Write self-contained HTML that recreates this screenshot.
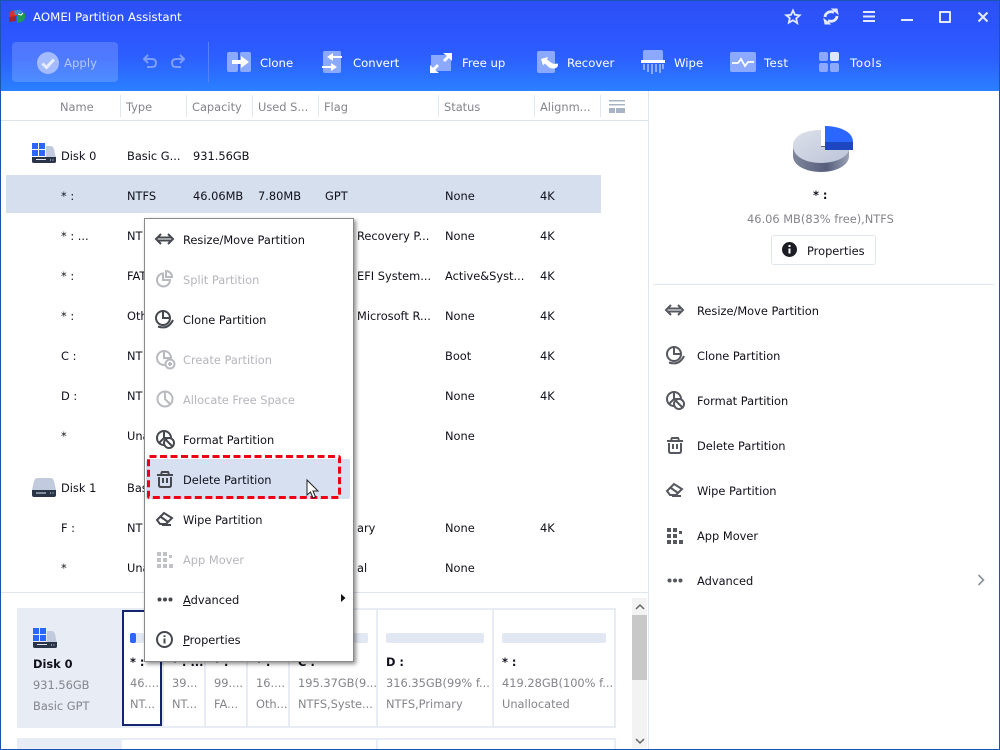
<!DOCTYPE html>
<html><head><meta charset="utf-8"><style>
html,body{margin:0;padding:0;background:#fff}
#w{position:relative;width:1000px;height:750px;overflow:hidden;background:#fff;font-family:"DejaVu Sans","Liberation Sans",sans-serif;font-size:11.4px;color:#10101c}
.t{position:absolute;white-space:nowrap;line-height:16px}
.a{position:absolute}
.h{color:#84848c}
.g{color:#84848c}
.d{color:#b4b6bc}
.b{color:#fff;font-size:11.7px}
.s{position:absolute;top:95px;width:1px;height:22px;background:#e2e7f0}
.cd{position:absolute;top:610px;height:116px;background:#fff}
svg{position:absolute;overflow:visible}
u{text-decoration:underline}
</style></head><body><div id="w">
<div class="a" style="left:0;top:0;width:1000px;height:91px;background:linear-gradient(#2b50f4 0,#2d56ff 40%,#2c60ff 65%,#2a80ff 100%)"></div>

<svg style="left:8px;top:9px" width="18" height="15" viewBox="0 0 18 15"><path d="M1 6Q2 1 8 1L9 7H8L1 11Z" fill="#d8322e"/><path d="M1 8l7-1v5l-7 1z" fill="#a8222a"/><path d="M6 2Q12-1 15 3L10 6H7z" fill="#3a8ccc"/><path d="M9 5l8-1v5q-1 4-8 5z" fill="#1f9c50"/><path d="M10 5l3 1 2-2" stroke="#fff" fill="none"/></svg>
<div class="t" style="left:33px;top:9px;color:#fff;font-size:11.8px">AOMEI Partition Assistant</div>

<div class="a" style="left:12px;top:42px;width:106px;height:40px;border-radius:4px;background:rgba(255,255,255,.17)"></div>
<svg style="left:37px;top:52px" width="22" height="22"><circle cx="11" cy="11" r="11" fill="#a4bcff"/><path d="M5.500 11.500l4 4 7.500-8" stroke="#e8eeff" stroke-width="3" fill="none"/></svg>
<div class="t b" style="left:64px;top:55px;color:#b4c8ff">Apply</div>
<svg style="left:142px;top:54px" width="44" height="14" fill="none" stroke="#7e9eff" stroke-width="2"><path d="M2 5h8q4 0 4 4t-4 4H5M6 1L2 5l4 4"/><path d="M42 5h-8q-4 0-4 4t4 4h5M38 1l4 4-4 4"/></svg>
<div class="a" style="left:208px;top:42px;width:1px;height:40px;background:#5580ff"></div>

<svg style="left:227px;top:52px" width="24" height="20"><rect width="11" height="20" rx="2" fill="#8aa9ff"/><rect x="13" width="11" height="20" rx="2" fill="#8aa9ff"/><path d="M5 8h9V4l8 6-8 6v-4H5z" fill="#fff"/></svg>
<div class="t b" style="left:260px;top:55px">Clone</div>
<svg style="left:322px;top:51px" width="20" height="22"><rect x="1" y="0" width="18" height="22" rx="2" fill="#8aa9ff"/><path d="M20 5h-9V2L5 6l6 4V7h9zM0 15h9v-3l6 4-6 4v-3H0z" fill="#fff"/></svg>
<div class="t b" style="left:353px;top:55px">Convert</div>
<svg style="left:430px;top:53px" width="22" height="20"><rect x="1" y="2" width="20" height="16" fill="#8aa9ff"/><path d="M13 0h9v8l-3-3-4 4-2-2 4-4zM9 20H0v-8l3 3 4-4 2 2-4 4z" fill="#fff"/></svg>
<div class="t b" style="left:462px;top:55px">Free up</div>
<svg style="left:537px;top:51px" width="22" height="22"><rect width="18" height="22" rx="2" fill="#8aa9ff"/><path d="M4 8l7-2-1 2.500 4 3q2 2 6 1 1 0 1 1 0 4-5 4-3 0-5-2l-3-3-2 2z" fill="#fff"/></svg>
<div class="t b" style="left:567px;top:55px">Recover</div>
<svg style="left:641px;top:50px" width="24" height="24"><path d="M2 12V2q0-2 2-2h16q2 0 2 2v10z" fill="#8aa9ff"/><rect y="10" width="24" height="3" fill="#fff"/><path d="M3 14v6M7 14v8M11 14v10M15 14v8M19 14v9M22 14v5" stroke="#8aa9ff" stroke-width="2"/></svg>
<div class="t b" style="left:674px;top:55px">Wipe</div>
<svg style="left:730px;top:52px" width="26" height="20"><rect width="26" height="20" rx="2" fill="#8aa9ff"/><path d="M2 11h6l3-4 4 7 3-4h6" stroke="#fff" stroke-width="1.800" fill="none"/></svg>
<div class="t b" style="left:764px;top:55px;letter-spacing:.3px">Test</div>
<svg style="left:819px;top:52px" width="20" height="20"><rect width="9" height="9" rx="2" fill="#8aa9ff"/><rect x="11" width="9" height="9" rx="2" fill="#dfe7ff"/><rect y="11" width="9" height="9" rx="2" fill="#8aa9ff"/><rect x="11" y="11" width="9" height="9" rx="2" fill="#8aa9ff"/></svg>
<div class="t b" style="left:850px;top:55px;letter-spacing:.7px">Tools</div>

<svg style="left:785px;top:9px" width="16" height="15"><path d="M8 1.500l2 4.300 4.700.5-3.500 3.200 1 4.600L8 11.300 3.800 13.600l1-4.600L1.300 6.300 6 5.800z" fill="none" stroke="#e4eaff" stroke-width="1.800"/></svg>
<svg style="left:823px;top:9px" width="16" height="15" fill="none" stroke="#e4eaff" stroke-width="2.800"><path d="M2 8a6 5.500 0 0 1 9-4.500M14 7a6 5.500 0 0 1-9 4.500"/><path d="M9 0l6 5-1-5zM7 15L1 10l1 5z" fill="#e4eaff" stroke-width="1"/></svg>
<div class="a" style="left:863px;top:11px;width:12px;height:11px;background:linear-gradient(#e4eaff 0 2px,transparent 2px 4.500px,#e4eaff 4.500px 6.500px,transparent 6.500px 9px,#e4eaff 9px)"></div>
<div class="a" style="left:901px;top:19px;width:12px;height:2px;background:#e4eaff"></div>
<div class="a" style="left:939px;top:11px;width:8px;height:8px;border:2px solid #e4eaff;border-radius:1px"></div>
<svg style="left:977px;top:11px" width="12" height="12"><path d="M1.500 1.500l9 9M10.500 1.500l-9 9" stroke="#e4eaff" stroke-width="2"/></svg>

<!-- header -->
<div class="t h" style="left:60px;top:99px">Name</div><div class="t h" style="left:126px;top:99px">Type</div><div class="t h" style="left:192px;top:99px">Capacity</div><div class="t h" style="left:258px;top:99px">Used S...</div><div class="t h" style="left:324px;top:99px">Flag</div><div class="t h" style="left:444px;top:99px">Status</div><div class="t h" style="left:540px;top:99px">Alignm...</div>
<div class="s" style="left:120px"></div><div class="s" style="left:186px"></div><div class="s" style="left:252px"></div><div class="s" style="left:318px"></div><div class="s" style="left:438px"></div><div class="s" style="left:534px"></div><div class="s" style="left:600px"></div>
<svg style="left:609px;top:100px" width="16" height="14"><path d="M0 0h16v1.500H0zM0 4h16v1.500H0zM0 8h16v5H0z" fill="#a8b4c6"/><path d="M6 8h1v5H6z" fill="#fff"/></svg>
<div class="a" style="left:1px;top:120px;width:647px;height:1px;background:#dde3ee"></div>
<div class="a" style="left:648px;top:91px;width:1px;height:659px;background:#dfe4ee"></div>

<!-- rows -->
<div class="a" style="left:6px;top:175px;width:595px;height:38px;background:#d5dfee"></div>
<svg style="left:32px;top:143px" width="24" height="21"><path d="M14 3h5q2 0 3 3l2 9v5H0v-5h14z" fill="#c2cade"/><path d="M0 14h24v4q0 2-2 2H2q-2 0-2-2z" fill="#2a3448"/><path d="M4 16.500h10M18 17h1M20.500 17h1" stroke="#dfe4ee" stroke-width="1"/><path d="M0 0h6v6H0zM7 0h6v6H7zM0 7h6v6H0zM7 7h6v6H7z" fill="#2d66ff"/></svg>
<div class="t" style="left:61px;top:148px">Disk 0</div><div class="t" style="left:127px;top:148px">Basic G...</div><div class="t" style="left:193px;top:148px">931.56GB</div>
<div class="t" style="left:61px;top:188px">* :</div><div class="t" style="left:127px;top:188px">NTFS</div><div class="t" style="left:193px;top:188px">46.06MB</div><div class="t" style="left:258px;top:188px">7.80MB</div><div class="t" style="left:325px;top:188px">GPT</div><div class="t" style="left:445px;top:188px">None</div><div class="t" style="left:540px;top:188px">4K</div>
<div class="t" style="left:61px;top:228px">* : ...</div><div class="t" style="left:127px;top:228px">NT</div><div class="t" style="left:357px;top:228px">Recovery P...</div><div class="t" style="left:445px;top:228px">None</div><div class="t" style="left:540px;top:228px">4K</div>
<div class="t" style="left:61px;top:268px">* :</div><div class="t" style="left:127px;top:268px">FAT</div><div class="t" style="left:357px;top:268px">EFI System...</div><div class="t" style="left:445px;top:268px">Active&amp;Syst...</div><div class="t" style="left:540px;top:268px">4K</div>
<div class="t" style="left:61px;top:308px">* :</div><div class="t" style="left:127px;top:308px">Oth</div><div class="t" style="left:357px;top:308px">Microsoft R...</div><div class="t" style="left:445px;top:308px">None</div><div class="t" style="left:540px;top:308px">4K</div>
<div class="t" style="left:61px;top:348px">C :</div><div class="t" style="left:127px;top:348px">NT</div><div class="t" style="left:445px;top:348px">Boot</div><div class="t" style="left:540px;top:348px">4K</div>
<div class="t" style="left:61px;top:388px">D :</div><div class="t" style="left:127px;top:388px">NT</div><div class="t" style="left:445px;top:388px">None</div><div class="t" style="left:540px;top:388px">4K</div>
<div class="t" style="left:61px;top:428px">*</div><div class="t" style="left:127px;top:428px">Una</div><div class="t" style="left:445px;top:428px">None</div>
<svg style="left:32px;top:478px" width="24" height="19"><path d="M5 0h14q2 0 3 3l2 9v4H0v-4l2-9q1-3 3-3z" fill="#c2cade"/><path d="M0 12h24v5q0 2-2 2H2q-2 0-2-2z" fill="#2a3448"/><path d="M4 15h10M18 15h1M20.500 15h1" stroke="#dfe4ee"/></svg>
<div class="t" style="left:61px;top:480px">Disk 1</div><div class="t" style="left:127px;top:480px">Bas</div>
<div class="t" style="left:61px;top:520px">F :</div><div class="t" style="left:127px;top:520px">NT</div><div class="t" style="left:357px;top:520px">ary</div><div class="t" style="left:445px;top:520px">None</div><div class="t" style="left:540px;top:520px">4K</div>
<div class="t" style="left:61px;top:560px">*</div><div class="t" style="left:127px;top:560px">Una</div><div class="t" style="left:357px;top:560px">al</div><div class="t" style="left:445px;top:560px">None</div>

<!-- bottom -->
<div class="a" style="left:1px;top:592px;width:647px;height:1px;background:#dfe4ee"></div>
<div class="a" style="left:17px;top:608px;width:105px;height:120px;background:#e8ecf4"></div>
<div class="a" style="left:122px;top:608px;width:494px;height:120px;background:#e8ecf4"></div>
<svg style="left:33px;top:628px" width="24" height="21"><path d="M14 3h5q2 0 3 3l2 9v5H0v-5h14z" fill="#c2cade"/><path d="M0 14h24v4q0 2-2 2H2q-2 0-2-2z" fill="#2a3448"/><path d="M4 16.500h10M18 17h1M20.500 17h1" stroke="#dfe4ee"/><path d="M0 0h6v6H0zM7 0h6v6H7zM0 7h6v6H0zM7 7h6v6H7z" fill="#2d66ff"/></svg>
<div class="t" style="left:33px;top:656px;font-weight:bold">Disk 0</div>
<div class="t g" style="left:33px;top:677px">931.56GB</div>
<div class="t g" style="left:33px;top:698px">Basic GPT</div>

<div class="cd" style="left:122px;width:36px;border:2px solid #14246e;top:610px;height:112px"></div>
<div class="cd" style="left:164px;width:40px"></div><div class="cd" style="left:206px;width:40px"></div><div class="cd" style="left:248px;width:40px"></div><div class="cd" style="left:290px;width:86px"></div><div class="cd" style="left:378px;width:114px"></div><div class="cd" style="left:494px;width:120px"></div>
<div class="a" style="left:130px;top:633px;width:14px;height:10px;background:#e2e8f3;border-radius:2px"></div>
<div class="a" style="left:130px;top:633px;width:6px;height:10px;background:#2d66ff;border-radius:2px"></div>
<div class="a" style="left:354px;top:633px;width:14px;height:10px;background:#e2e8f3;border-radius:0 2px 2px 0"></div>
<div class="a" style="left:386px;top:633px;width:98px;height:10px;background:#e2e8f3;border-radius:2px"></div>
<div class="a" style="left:502px;top:633px;width:104px;height:10px;background:#e2e8f3;border-radius:2px"></div>
<div class="t" style="left:130px;top:654px;font-weight:bold">*&nbsp;:</div>
<div class="t g" style="left:130px;top:675px">46....</div><div class="t g" style="left:130px;top:696px">NT...</div>
<div class="t" style="left:172px;top:654px;font-weight:bold">* : ...</div><div class="t g" style="left:172px;top:675px">39...</div><div class="t g" style="left:172px;top:696px">NT...</div>
<div class="t" style="left:214px;top:654px;font-weight:bold">* :</div><div class="t g" style="left:214px;top:675px">99....</div><div class="t g" style="left:214px;top:696px">FA...</div>
<div class="t" style="left:256px;top:654px;font-weight:bold">* :</div><div class="t g" style="left:256px;top:675px">16....</div><div class="t g" style="left:256px;top:696px">Oth...</div>
<div class="t" style="left:298px;top:654px;font-weight:bold">C :</div>
<div class="t g" style="left:298px;top:675px">195.37GB(9...</div><div class="t g" style="left:298px;top:696px">NTFS,Syste...</div>
<div class="t" style="left:386px;top:654px;font-weight:bold">D :</div>
<div class="t g" style="left:386px;top:675px">316.35GB(99% f...</div><div class="t g" style="left:386px;top:696px">NTFS,Primary</div>
<div class="t" style="left:502px;top:654px;font-weight:bold">* :</div>
<div class="t g" style="left:502px;top:675px">419.28GB(100% f...</div><div class="t g" style="left:502px;top:696px">Unallocated</div>
<div class="a" style="left:17px;top:738px;width:105px;height:12px;background:#e8ecf4"></div>
<div class="a" style="left:122px;top:738px;width:494px;height:12px;background:#e8ecf4"></div>
<div class="a" style="left:122px;top:740px;width:254px;height:10px;background:#fff"></div>
<div class="a" style="left:378px;top:740px;width:236px;height:10px;background:#fff"></div>
<div class="a" style="left:632px;top:598px;width:15px;height:150px;background:#f3f3f3"></div>
<div class="a" style="left:632px;top:615px;width:15px;height:65px;background:#c8c8c8"></div>
<svg style="left:635px;top:603px" width="10" height="142" fill="none" stroke="#666" stroke-width="1.500"><path d="M1 6l4-4 4 4M1 136l4 4 4-4"/></svg>

<!-- right -->
<svg style="left:790px;top:126px" width="66" height="50"><defs><linearGradient id="p1" x1="0" x2="1" y1="0" y2="1"><stop offset="0" stop-color="#dce0ea"/><stop offset="1" stop-color="#bcc4d8"/></linearGradient><linearGradient id="p2" x1="0" x2="1"><stop offset="0" stop-color="#7e869c"/><stop offset=".6" stop-color="#565e7c"/><stop offset="1" stop-color="#9aa2b6"/></linearGradient></defs><path d="M3 20v10c0 9 12 16 28 16s28-7 28-16V20z" fill="url(#p2)"/><path d="M31 4C14 4 3 10 3 20s12 17 28 17 28-7 28-14v-2H31z" fill="url(#p1)"/><path d="M35 0c13 0 28 5 28 16H35z" fill="#2a66ff"/><path d="M35 16h28v8H35z" fill="#1e46c0"/></svg>
<div class="t" style="left:813px;top:187px;font-weight:bold">* :</div>
<div class="t g" style="left:747px;top:211px">46.06 MB(83% free),NTFS</div>
<div class="a" style="left:771px;top:235px;width:103px;height:28px;border:1px solid #dfe4ee;border-radius:3px"></div>
<svg style="left:782px;top:242px" width="15" height="15"><circle cx="7.500" cy="7.500" r="7.500" fill="#1c1c24"/><path d="M6.500 6.500h2v5h-2zM6.500 3h2v2h-2z" fill="#fff"/></svg>
<div class="t" style="left:807px;top:243px">Properties</div>
<div class="a" style="left:653px;top:284px;width:341px;height:1px;background:#e2e6f0"></div>

<svg width="0" height="0"><defs>
<g id="rz" fill="none"><path d="M6 1L1 6l5 5M13 1l5 5-5 5M2 4.500h15M2 7.500h15" stroke-width="2"/></g>
<g id="cl" fill="none" stroke-width="2"><circle cx="8" cy="8" r="7"/><path d="M8 1v7h7"/><path d="M3 16.500Q13 20 18 10"/></g>
<g id="fm" fill="none" stroke-width="2"><circle cx="8" cy="8" r="7"/><path d="M8 1v7l-5 5M8 8h7"/><circle cx="13" cy="13" r="5" fill="#fff"/><path d="M9.500 9.500l7 7"/></g>
<g id="dl" fill="none" stroke-width="2"><path d="M0 4h16M4 3l1-2h6l1 2"/><path d="M2 6v8q0 2 2 2h8q2 0 2-2V6M6 7v5M10 7v5"/></g>
<g id="wp" fill="none" stroke-width="2"><path d="M1 9l7-7 8 5-6 6H4zM5 6l7 5M6 14h9"/></g>
<g id="ap"><path d="M0 0h4v4H0zM6 0h4v4H6zM0 6h4v4H0zM6 6h4v4H6zM0 12h4v4H0zM6 12h4v4H6zM12 12h4v4h-4zM12 3h3v3h-3z"/></g>
<g id="ad"><circle cx="2.500" cy="2.500" r="2"/><circle cx="8" cy="2.500" r="2"/><circle cx="13.500" cy="2.500" r="2"/></g>
</defs></svg>
<svg style="left:665px;top:304px" width="19" height="12" stroke="#55585f"><use href="#rz"/></svg><div class="t" style="left:697px;top:303px">Resize/Move Partition</div>
<svg style="left:666px;top:346px" width="20" height="20" stroke="#55585f"><use href="#cl"/></svg><div class="t" style="left:697px;top:348px">Clone Partition</div>
<svg style="left:666px;top:391px" width="20" height="20" stroke="#55585f"><use href="#fm"/></svg><div class="t" style="left:697px;top:393px">Format Partition</div>
<svg style="left:667px;top:437px" width="16" height="17" stroke="#55585f"><use href="#dl"/></svg><div class="t" style="left:697px;top:438px">Delete Partition</div>
<svg style="left:666px;top:482px" width="18" height="16" stroke="#55585f"><use href="#wp"/></svg><div class="t" style="left:697px;top:483px">Wipe Partition</div>
<svg style="left:667px;top:528px" width="16" height="16" fill="#55585f"><use href="#ap"/></svg><div class="t" style="left:697px;top:528px">App Mover</div>
<svg style="left:667px;top:578px" width="16" height="5" fill="#55585f"><use href="#ad"/></svg><div class="t" style="left:697px;top:573px">Advanced</div>
<svg style="left:977px;top:574px" width="8" height="12" fill="none" stroke="#8c9098" stroke-width="1.600"><path d="M1.500 1l5 5-5 5"/></svg>

<!-- menu -->
<div class="a" style="left:144px;top:218px;width:208px;height:442px;background:#fff;border:1px solid #8a8a8a;box-shadow:2px 2px 4px rgba(0,0,0,.45)"></div>
<div class="a" style="left:146px;top:459px;width:204px;height:40px;background:#d6e0f0;border-radius:2px"></div>
<svg style="left:155px;top:233px" width="19" height="12" stroke="#45484f"><use href="#rz"/></svg><div class="t" style="left:183px;top:232px">Resize/Move Partition</div>
<svg style="left:156px;top:270px" width="18" height="18" fill="none" stroke="#b8bac0" stroke-width="2"><path d="M14 10A6.500 6.500 0 1 1 7 3.500V10z"/><path d="M10 1a6 6 0 0 1 6 6h-6z"/></svg><div class="t d" style="left:183px;top:272px">Split Partition</div>
<svg style="left:155px;top:310px" width="20" height="20" stroke="#45484f"><use href="#cl"/></svg><div class="t" style="left:183px;top:312px">Clone Partition</div>
<svg style="left:156px;top:350px" width="20" height="20" fill="none" stroke="#b8bac0" stroke-width="2"><circle cx="8" cy="8" r="7"/><path d="M8 1v7h7"/><circle cx="14" cy="14" r="4.500" fill="#fff"/><path d="M12 14h4M14 12v4"/></svg><div class="t d" style="left:183px;top:352px">Create Partition</div>
<svg style="left:156px;top:390px" width="18" height="18" fill="none" stroke="#b8bac0" stroke-width="2"><circle cx="9" cy="9" r="7.500"/><path d="M9 2v7l5 5"/></svg><div class="t d" style="left:183px;top:392px">Allocate Free Space</div>
<svg style="left:156px;top:430px" width="20" height="20" stroke="#45484f"><use href="#fm"/></svg><div class="t" style="left:183px;top:432px">Format Partition</div>
<svg style="left:157px;top:471px" width="16" height="17" stroke="#45484f"><use href="#dl"/></svg><div class="t" style="left:183px;top:472px">Delete Partition</div>
<svg style="left:156px;top:511px" width="18" height="16" stroke="#45484f"><use href="#wp"/></svg><div class="t" style="left:183px;top:512px">Wipe Partition</div>
<svg style="left:157px;top:552px" width="16" height="16" fill="#c0c2c8"><use href="#ap"/></svg><div class="t d" style="left:183px;top:552px">App Mover</div>
<svg style="left:157px;top:597px" width="16" height="5" fill="#45484f"><use href="#ad"/></svg><div class="t" style="left:183px;top:592px"><u>A</u>dvanced</div>
<svg style="left:341px;top:594px" width="5" height="8"><path d="M0 0l4.500 4L0 8z" fill="#111"/></svg>
<svg style="left:156px;top:631px" width="18" height="18" fill="none" stroke="#45484f" stroke-width="2"><circle cx="8.500" cy="8.500" r="7.500"/><path d="M8.500 7.500v5M8.500 4.200v1.800"/></svg><div class="t" style="left:183px;top:632px"><u>P</u>roperties</div>

<svg style="left:0;top:0" width="1000" height="750"><rect x="148.500" y="456.500" width="191" height="41" rx="1" fill="none" stroke="#ee0014" stroke-width="3" stroke-dasharray="7 3.500"/><path d="M307 480v15l3.500-3 2.500 6 2.500-1-2.500-6h5z" fill="#fff" stroke="#222" stroke-width="1"/></svg>

<div class="a" style="left:0;top:0;width:1000px;height:1px;background:#1a54b0"></div>
<div class="a" style="left:0;top:0;width:1px;height:750px;background:#1a54b0"></div>
<div class="a" style="left:999px;top:0;width:1px;height:750px;background:#1a54b0"></div>
<div class="a" style="left:0;top:749px;width:1000px;height:1px;background:#1a54b0"></div>
</div></body></html>
